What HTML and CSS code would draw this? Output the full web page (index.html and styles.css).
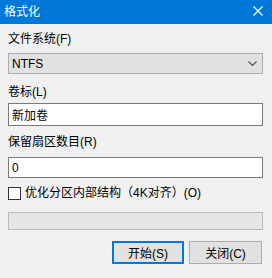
FILE: index.html
```html
<!DOCTYPE html>
<html lang="zh-CN">
<head>
  <meta charset="UTF-8">
  <title>格式化</title>
  <link rel="stylesheet" href="styles.css">
</head>
<body>
  <div class="titlebar">
    <span class="title">格式化</span>
    <svg class="close" width="10" height="10" viewBox="0 0 10 10">
      <path d="M0.5 0.5 L9.5 9.5 M9.5 0.5 L0.5 9.5" stroke="#fff" stroke-width="1.2" fill="none"/>
    </svg>
  </div>
  <div class="content">
    <div class="label label-fs">文件系统(F)</div>
    <div class="select">
      <span>NTFS</span>
      <svg width="9" height="5" viewBox="0 0 9 5">
        <path d="M0.5 0.5 L4.5 4.5 L8.5 0.5" stroke="#555" stroke-width="1.2" fill="none"/>
      </svg>
    </div>
    <div class="label label-vol">卷标(L)</div>
    <div class="input input-vol">新加卷</div>
    <div class="label label-res">保留扇区数目(R)</div>
    <div class="input input-res">0</div>
    <div class="check-row">
      <span class="checkbox"></span>
      <span>优化分区内部结构（4K对齐）(O)</span>
    </div>
    <div class="progress"></div>
    <div class="buttons">
      <button class="btn default">开始(S)</button>
      <button class="btn">关闭(C)</button>
    </div>
  </div>
</body>
</html>
```

FILE: styles.css
```css
body {
  margin: 0;
  background: #f0f0f0;
  font-family: "Liberation Sans", "Noto Sans CJK SC", sans-serif;
  font-size: 12px;
  color: #000;
}
.titlebar {
  height: 24px;
  background: #0078d7;
  color: #fff;
  display: flex;
  align-items: center;
  justify-content: space-between;
  padding: 0 9px 0 4px;
}
.title {
  line-height: 16px;
}
.close {
  display: block;
  margin-top: -2px;
}
.content {
  padding: 7px 9px 0 8px;
}
.label {
  line-height: 16px;
  height: 16px;
}
.select {
  margin-top: 6px;
  height: 19px;
  border: 1px solid #adadad;
  background: #e1e1e1;
  display: flex;
  align-items: center;
  justify-content: space-between;
  padding: 0 5px 0 3px;
}
.label-vol {
  margin-top: 10px;
}
.input {
  background: #fff;
  border: 1px solid #7a7a7a;
  padding: 0 3px;
  display: flex;
  align-items: center;
}
.input-vol {
  margin-top: 3px;
  height: 21px;
}
.label-res {
  margin-top: 8px;
}
.input-res {
  margin-top: 7px;
  height: 19px;
}
.check-row {
  margin-top: 9px;
  height: 13px;
  display: flex;
  align-items: center;
  gap: 4px;
  line-height: 13px;
}
.checkbox {
  width: 11px;
  height: 11px;
  border: 1px solid #333;
  background: #fff;
}
.progress {
  margin-top: 12px;
  height: 16px;
  border: 1px solid #bcbcbc;
  background: #e6e6e6;
}
.buttons {
  margin-top: 11px;
  margin-right: 1px;
  display: flex;
  justify-content: flex-end;
  gap: 5px;
}
.btn {
  width: 73px;
  height: 23px;
  border: 1px solid #adadad;
  background: #e1e1e1;
  font-family: inherit;
  font-size: 12px;
  color: #000;
  padding: 0;
}
.btn.default {
  border: 2px solid #0078d7;
  width: 72px;
}
```
